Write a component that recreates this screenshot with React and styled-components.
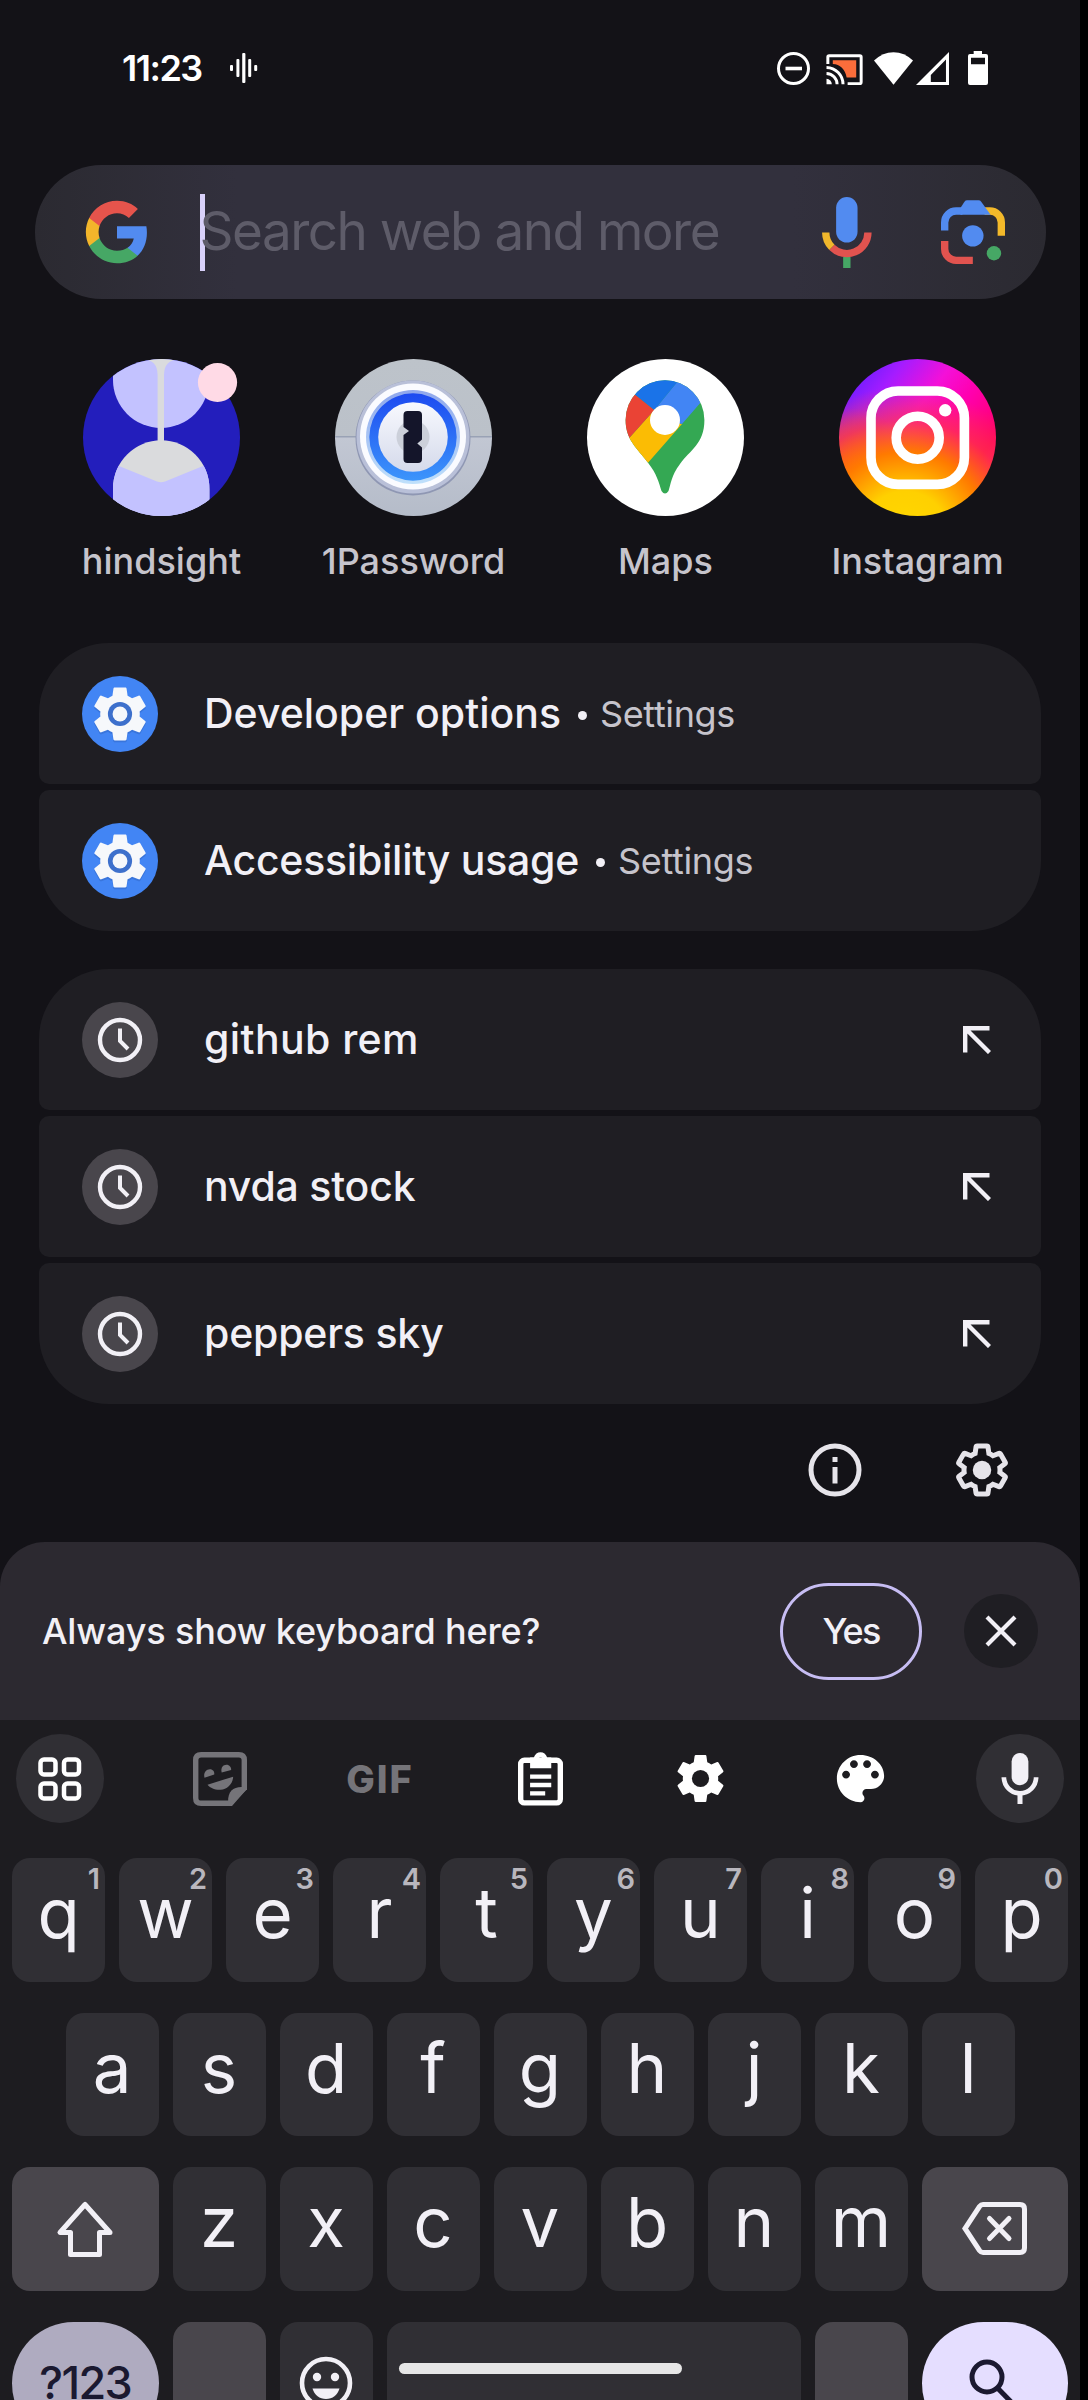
import React from "react";
import styled, { createGlobalStyle } from "styled-components";

const color = {
  screen: "#131217",
  card: "#1f1e23",
  text: "#f2f0f6",
  muted: "#c6c4cc",
  keyboard: "#1d1c20",
  key: "#302f34",
  special: "#49464c",
};

const GlobalStyle = createGlobalStyle`
  * { box-sizing: border-box; }
  body { margin: 0; background: #000; }
  svg { display: block; flex: none; }
`;

const Screen = styled.main`
  position: relative;
  display: flex;
  flex-direction: column;
  width: 1080px;
  height: 2400px;
  overflow: hidden;
  background: ${color.screen};
  color: ${color.text};
  font-family: Inter, Roboto, "Liberation Sans", sans-serif;
  & > * { flex-shrink: 0; }
`;

/* ---------- Status bar ---------- */

const StatusBar = styled.header`
  display: flex;
  align-items: center;
  justify-content: space-between;
  height: 135px;
  padding: 0 92px 0 122px;
`;

const StatusGroup = styled.div`
  display: flex;
  align-items: ${(p) => (p.$end ? "flex-end" : "center")};
  gap: ${(p) => p.$gap}px;
`;

const Clock = styled.time`
  font-size: 36px;
  font-weight: 600;
  letter-spacing: -1.5px;
  line-height: 40px;
  color: #fff;
`;

/* ---------- Search field ---------- */

const SearchBar = styled.div`
  display: flex;
  align-items: center;
  width: 1011px;
  height: 134px;
  margin: 30px 0 0 34.5px;
  padding: 0 41px 0 48px;
  border-radius: 67px;
  background: linear-gradient(90deg, #2b2a31 0%, #32303d 20%, #32303d 75%, #2b2a31 100%);
`;

const Caret = styled.span`
  width: 5px;
  height: 77px;
  margin-left: 49px;
  background: #d9d1fa;
`;

const Placeholder = styled.span`
  flex: 1;
  margin-left: -5px;
  padding-bottom: 2px;
  font-size: 53px;
  line-height: 70px;
  letter-spacing: -1.5px;
  color: #5e5c69;
`;

const SearchActions = styled.div`
  display: flex;
  align-items: center;
  gap: 69px;
`;

/* ---------- App shortcuts ---------- */

const AppRow = styled.section`
  display: grid;
  grid-template-columns: repeat(4, 252px);
  margin: 60px 0 0 35.5px;
`;

const AppTile = styled.div`
  display: flex;
  flex-direction: column;
  align-items: center;
`;

const AppLabel = styled.span`
  margin-top: 25px;
  font-size: 36px;
  font-weight: 500;
  line-height: 41px;
  color: ${color.muted};
`;

/* ---------- Result lists ---------- */

const Group = styled.section`
  display: flex;
  flex-direction: column;
  gap: 6px;
  margin: ${(p) => p.$top}px 39px 0;
`;

const Result = styled.div`
  display: flex;
  align-items: center;
  height: 141px;
  padding: 0 50px 0 43px;
  background: ${color.card};
  border-radius: 10px;
  &:first-child { border-top-left-radius: 70px; border-top-right-radius: 70px; }
  &:last-child { border-bottom-left-radius: 70px; border-bottom-right-radius: 70px; }
`;

const Badge = styled.span`
  display: flex;
  align-items: center;
  justify-content: center;
  flex: none;
  width: 76px;
  height: 76px;
  margin-right: 46px;
  border-radius: 50%;
  background: ${(p) => p.$bg};
`;

const Title = styled.span`
  padding-bottom: 2px;
  font-size: 41px;
  font-weight: 500;
  line-height: 50px;
  letter-spacing: ${(p) => p.$track || 0}px;
`;

const Dot = styled.span`
  width: 9px;
  height: 9px;
  margin: 3px 13px 0 17px;
  border-radius: 50%;
  background: ${color.text};
`;

const Source = styled.span`
  font-size: 36px;
  line-height: 44px;
  letter-spacing: -0.35px;
  color: ${color.muted};
`;

const Spacer = styled.span`
  flex: 1;
`;

const FooterActions = styled.div`
  display: flex;
  justify-content: flex-end;
  gap: 87px;
  margin-top: 36px;
  padding-right: 68px;
`;

/* ---------- Keyboard prompt ---------- */

const Prompt = styled.section`
  display: flex;
  align-items: center;
  height: 178px;
  margin-top: 42px;
  padding: 0 42px;
  border-radius: 45px 45px 0 0;
  background: #2c2930;
`;

const PromptText = styled.span`
  flex: 1;
  font-size: 36px;
  font-weight: 500;
  letter-spacing: -0.15px;
`;

const YesButton = styled.button`
  width: 142px;
  height: 97px;
  margin-right: 42px;
  padding: 0;
  border: 3px solid #c7bdf3;
  border-radius: 49px;
  background: none;
  color: ${color.text};
  font: 500 36px Inter, sans-serif;
  letter-spacing: -1.8px;
`;

const CloseButton = styled.button`
  display: flex;
  align-items: center;
  justify-content: center;
  width: 74px;
  height: 74px;
  padding: 0;
  border: 0;
  border-radius: 50%;
  background: ${color.card};
`;

/* ---------- Keyboard ---------- */

const Keyboard = styled.section`
  height: 680px;
  padding: 14px 12px 0;
  overflow: hidden;
  background: ${color.keyboard};
`;

const Toolbar = styled.div`
  display: flex;
  justify-content: space-between;
  margin: 0 4px 35px;
`;

const Tool = styled.span`
  display: flex;
  align-items: center;
  justify-content: center;
  width: 88px;
  height: 89px;
  border-radius: 50%;
  background: ${(p) => (p.$round ? color.key : "none")};
`;

const GifLabel = styled.span`
  font-size: 38px;
  font-weight: 800;
  letter-spacing: 2px;
  color: #757479;
`;

const KeyRow = styled.div`
  display: flex;
  justify-content: center;
  gap: 14px;
  height: 123.5px;
  margin-bottom: 31px;
`;

const Key = styled.span`
  position: relative;
  display: flex;
  justify-content: center;
  align-items: ${(p) => (p.$middle ? "center" : "flex-start")};
  width: ${(p) => p.$w || 93}px;
  border-radius: ${(p) => (p.$pill ? 62 : 18)}px;
  background: ${(p) => p.$bg || color.key};
  font-size: 69px;
  line-height: 110px;
`;

const Hint = styled.sup`
  position: absolute;
  top: 0;
  right: 5px;
  font-size: 29px;
  font-weight: 600;
  line-height: 41px;
  color: #b9b7be;
`;

const ModeLabel = styled.span`
  font-size: 45px;
  font-weight: 500;
  line-height: 60px;
  letter-spacing: -1.6px;
  color: #1b1930;
`;

const HomeIndicator = styled.div`
  position: absolute;
  left: 399px;
  bottom: 26px;
  width: 283px;
  height: 11px;
  border-radius: 6px;
  background: #e6e6e6;
`;

/* ---------- Icons ---------- */

const gearPath =
  "M19.14 12.94c.04-.3.06-.61.06-.94 0-.32-.02-.64-.07-.94l2.03-1.58c.18-.14.23-.41.12-.61l-1.92-3.32c-.12-.22-.37-.29-.59-.22l-2.39.96c-.5-.38-1.03-.7-1.62-.94l-.36-2.54c-.04-.24-.24-.41-.48-.41h-3.84c-.24 0-.43.17-.47.41l-.36 2.54c-.59.24-1.13.57-1.62.94l-2.39-.96c-.22-.08-.47 0-.59.22L2.74 8.87c-.12.21-.08.47.12.61l2.03 1.58c-.05.3-.09.63-.09.94s.02.64.07.94l-2.03 1.58c-.18.14-.23.41-.12.61l1.92 3.32c.12.22.37.29.59.22l2.39-.96c.5.38 1.03.7 1.62.94l.36 2.54c.05.24.24.41.48.41h3.84c.24 0 .44-.17.47-.41l.36-2.54c.59-.24 1.13-.56 1.62-.94l2.39.96c.22.08.47 0 .59-.22l1.92-3.32c.12-.22.07-.47-.12-.61l-2.01-1.58z";

const WaveIcon = () => (
  <svg width="28" height="30" viewBox="0 0 28 30" fill="#fff">
    <rect x="0" y="12" width="3" height="6" rx="1" />
    <rect x="6.4" y="6" width="3" height="18" rx="1" />
    <rect x="12.2" y="0" width="3.2" height="30" rx="1" />
    <rect x="18.2" y="6" width="3" height="18" rx="1" />
    <rect x="24.2" y="12" width="3" height="6" rx="1" />
  </svg>
);

const DndIcon = () => (
  <svg width="33" height="33" viewBox="0 0 33 33">
    <circle cx="16.5" cy="16.5" r="15" fill="none" stroke="#fff" strokeWidth="3" />
    <path d="M8.5 16.5h16.5" stroke="#fff" strokeWidth="3.6" />
  </svg>
);

const CastIcon = () => (
  <svg width="37" height="31" viewBox="0 0 111 94" fill="none" stroke="#fff" strokeWidth="9">
    <path d="M5 30V9q0-4 4-4H102q4 0 4 4V86q0 4-4 4H65" />
    <path d="M20 19H91V71H62C58 46 42 31 20 30Z" fill="#fb6d3b" stroke="none" />
    <path d="M1 41A51 51 0 0 1 51 92M1 59A33 33 0 0 1 33 92" />
    <path d="M1 75A17 17 0 0 1 17 92H1Z" fill="#fff" stroke="none" />
  </svg>
);

const WifiIcon = () => (
  <svg width="39" height="33" viewBox="0 0 117 98" fill="#fff">
    <path d="M58.500 98L0 25Q26 0 58.500 0T117 25Z" />
  </svg>
);

const SignalIcon = () => (
  <svg width="33" height="33" viewBox="0 0 98 98" fill="#fff">
    <path fillRule="evenodd" d="M98 0V98H0ZM89 22V89H44V68Z" />
  </svg>
);

const BatteryIcon = () => (
  <svg width="20" height="34" viewBox="0 0 60 102">
    <path fill="#fff" fillRule="evenodd" d="M17 0H42V9H54q6 0 6 6V96q0 6-6 6H6q-6 0-6-6V15q0-6 6-6H17ZM9 20V40H51V20Z" />
  </svg>
);

const GoogleIcon = () => (
  <svg width="68" height="68" viewBox="0 0 24 24">
    <path fill="#528bf0" d="M22.56 12.25c0-.78-.07-1.53-.2-2.25H12v4.26h5.92c-.26 1.37-1.04 2.53-2.21 3.31v2.77h3.57c2.08-1.92 3.28-4.74 3.28-8.090z" />
    <path fill="#46a765" d="M12 23c2.970 0 5.460-.98 7.280-2.660l-3.570-2.770c-.98.66-2.230 1.060-3.710 1.060-2.860 0-5.290-1.930-6.160-4.530H2.180v2.840C3.990 20.530 7.700 23 12 23z" />
    <path fill="#f3b62b" d="M5.840 14.090c-.22-.66-.35-1.360-.35-2.090s.13-1.430.35-2.090V7.070H2.180C1.430 8.550 1 10.220 1 12s.43 3.450 1.180 4.930l2.850-2.220.81-.62z" />
    <path fill="#e6544c" d="M12 5.380c1.620 0 3.060.56 4.210 1.640l3.150-3.150C17.450 2.090 14.970 1 12 1 7.700 1 3.990 3.470 2.180 7.070l3.660 2.840c.87-2.600 3.300-4.530 6.160-4.530z" />
  </svg>
);

const VoiceIcon = () => (
  <svg width="50" height="71" viewBox="0 0 149 212" fill="none" strokeWidth="22">
    <rect x="42" y="0" width="64" height="136" rx="32" fill="#528bf0" />
    <path d="M63 179h22v33H63z" fill="#46a765" />
    <path d="M11 106A63 63 0 0 0 29.500 150.500" stroke="#f0b72c" />
    <path d="M29.500 150.500A63 63 0 0 0 137 106" stroke="#e1534f" />
  </svg>
);

const LensIcon = () => (
  <svg width="64" height="64" viewBox="0 0 191 191" fill="none" strokeWidth="22">
    <path d="M130 33H146a34 34 0 0 1 34 34V107" stroke="#f3b92a" />
    <path d="M11 91V67a34 34 0 0 1 34-34H64" stroke="#528bf0" />
    <path d="M58 24L70 5Q73 1 78 1H112Q117 1 120 5L148 44H58Z" fill="#528bf0" />
    <path d="M11 122V146a34 34 0 0 0 34 34H95" stroke="#e1534f" />
    <circle cx="95" cy="107" r="32" fill="#528bf0" />
    <circle cx="158" cy="159" r="21.500" fill="#46a765" />
  </svg>
);

const HindsightIcon = () => (
  <svg width="157" height="157" viewBox="0 0 157 157">
    <clipPath id="hs-disc"><circle cx="78.500" cy="78.500" r="78.500" /></clipPath>
    <clipPath id="hs-base"><path d="M30 160V129.500a48.200 48.200 0 0 1 96.400 0V160Z" /></clipPath>
    <g clipPath="url(#hs-disc)">
      <rect width="157" height="157" fill="#231ebc" />
      <path d="M30 0V21a48 48 0 0 0 96 0V0Z" fill="#c3c2ff" />
      <path d="M60 0Q74.600 1 74.600 16V84H81V16Q81 1 96 0Z" fill="#dadbdd" />
      <g clipPath="url(#hs-base)">
        <rect y="78" width="157" height="80" fill="#dadbdd" />
        <path d="M20 100L36 107L74 122.500Q78 124 82 122.500L120 107L140 99V160H20Z" fill="#c3c2ff" />
      </g>
    </g>
    <circle cx="134.500" cy="23.500" r="19.600" fill="#ffdae6" />
  </svg>
);

const OnePasswordIcon = () => (
  <svg width="157" height="157" viewBox="0 0 157 157">
    <defs>
      <linearGradient id="op-plate" x1="0" y1="0" x2="0" y2="1">
        <stop offset="0" stopColor="#bdc3ca" /><stop offset=".49" stopColor="#bbc1c9" />
        <stop offset=".5" stopColor="#c2c7d3" /><stop offset="1" stopColor="#b5bcc9" />
      </linearGradient>
      <linearGradient id="op-blue" x1="0" y1="0" x2="0" y2="1">
        <stop offset="0" stopColor="#1d4af0" /><stop offset="1" stopColor="#3c95fb" />
      </linearGradient>
      <linearGradient id="op-face" x1="0" y1="0" x2="0" y2="1">
        <stop offset="0" stopColor="#f8f9fe" /><stop offset="1" stopColor="#d5daeb" />
      </linearGradient>
      <linearGradient id="op-rim" x1="0" y1="0" x2="0" y2="1">
        <stop offset="0" stopColor="#8fa7ec" /><stop offset="1" stopColor="#bfe0fb" />
      </linearGradient>
    </defs>
    <circle cx="78.500" cy="78.500" r="78.500" fill="url(#op-plate)" />
    <path d="M0 77.800H157" stroke="#99a2b5" strokeWidth="1.400" />
    <circle cx="78" cy="79" r="57.500" fill="#8f97b3" />
    <circle cx="78" cy="78" r="56.500" fill="#b9c0d8" />
    <circle cx="78" cy="77.500" r="53" fill="#fafbff" />
    <circle cx="78" cy="78" r="47" fill="url(#op-rim)" />
    <circle cx="78" cy="78" r="43.700" fill="url(#op-blue)" />
    <circle cx="78" cy="78" r="34.800" fill="url(#op-face)" />
    <circle cx="78" cy="78" r="16.500" fill="#ccd0da" />
    <path d="M72.500 52H83q4 0 4 4V80.500L82.300 84.500L87 88.500V100q0 4-4 4H72.500q-4 0-4-4V76L74 72L68.500 68V56q0-4 4-4Z" fill="#14152a" />
  </svg>
);

const MapsIcon = () => (
  <svg width="157" height="157" viewBox="0 0 157 157">
    <clipPath id="maps-pin">
      <path d="M38.600 61A39.400 39.700 0 0 1 117.400 61C117.400 85 103 91 93 105C84 117 84 125 81.500 132Q78 137 74.500 132C72 124 70 115 61 103.700C50 89 38.600 81 38.600 61Z" />
    </clipPath>
    <circle cx="78.500" cy="78.500" r="78.500" fill="#fff" />
    <g clipPath="url(#maps-pin)">
      <rect width="157" height="157" fill="#34a853" />
      <path d="M67.300 51L42 79.300L30 93L61 103.700L95 64.900L78 61Z" fill="#fbbc04" />
      <path d="M30 20L48.600 36L67.300 51L42 79.300L30 93Z" fill="#ea4335" />
      <path d="M89.500 23.700L92 10H140V13.500L113 44.300L95 64.900L78 61L67.300 51Z" fill="#4285f4" />
      <path d="M48.600 36L30 20V5H105L67.300 51Z" fill="#1a73e8" />
    </g>
    <circle cx="78" cy="61" r="15" fill="#fff" />
  </svg>
);

const InstagramDisc = styled.span`
  display: flex;
  width: 157px;
  height: 157px;
  border-radius: 50%;
  background:
    radial-gradient(circle at 42% 112%, #ffd900 0%, #ffd000 22%, #ff7a00 42%, rgba(255, 60, 60, 0.6) 58%, rgba(255, 0, 110, 0) 75%),
    radial-gradient(circle at 8% 68%, #ff6a00 0%, rgba(255, 70, 40, 0.6) 16%, rgba(255, 0, 110, 0) 32%),
    linear-gradient(128deg, #6a1dff 10%, #a51cff 24%, #f410d8 42%, #ff00b0 56%, #ff0069 78%, #ff1a8c 100%);
`;

const InstagramIcon = () => (
  <InstagramDisc>
    <svg width="157" height="157" viewBox="0 0 157 157" fill="none" stroke="#fff" strokeWidth="9.600">
      <rect x="32" y="32" width="93.400" height="93.400" rx="27" />
      <circle cx="78.700" cy="78.700" r="21.500" />
      <circle cx="106.200" cy="51.300" r="6.200" fill="#fff" stroke="none" />
    </svg>
  </InstagramDisc>
);

const SettingsAppIcon = () => (
  <svg width="66" height="66" viewBox="0 0 24 24">
    <path d={gearPath} fill="#2f66c4" opacity=".5" transform="translate(0 .7)" />
    <path d={gearPath} fill="#f6f8fb" />
    <circle cx="12" cy="12" r="4.400" fill="#3d70cc" />
    <circle cx="12" cy="12" r="2.700" fill="#f6f8fb" />
  </svg>
);

const HistoryIcon = () => (
  <svg width="48" height="48" viewBox="0 0 48 48" fill="none" stroke={color.text} strokeWidth="4.400">
    <circle cx="24" cy="24" r="20" />
    <path d="M24 12.500V25L32 33" strokeWidth="4" />
  </svg>
);

const InsertIcon = () => (
  <svg width="28" height="28" viewBox="0 0 28 28" fill="none" stroke={color.text} strokeWidth="4.400">
    <path d="M2.200 26.500V2.200H26.500M2.200 2.200L26.500 26.500" />
  </svg>
);

const InfoIcon = () => (
  <svg width="60" height="60" viewBox="0 0 60 60" fill="none" stroke="#e6e4ea" strokeWidth="5">
    <circle cx="30" cy="30" r="24" />
    <path d="M30 27V43.500M30 17V22" />
  </svg>
);

const SettingsOutlineIcon = () => (
  <svg width="60" height="60" viewBox="0 0 24 24">
    <path d={gearPath} fill="none" stroke="#e6e4ea" strokeWidth="2" />
    <circle cx="12" cy="12" r="3.700" fill="#e6e4ea" />
  </svg>
);

const CloseIcon = () => (
  <svg width="32" height="32" viewBox="0 0 32 32">
    <path d="M2 2L30 30M30 2L2 30" stroke={color.text} strokeWidth="4.200" />
  </svg>
);

const GridIcon = () => (
  <svg width="44" height="44" viewBox="0 0 44 44" fill="none" stroke="#fff" strokeWidth="4.500">
    {[[2.5, 2.5], [26, 2.5], [2.5, 26.5], [26, 26.5]].map(([x, y]) => (
      <rect key={`${x}-${y}`} x={x} y={y} width="15" height="15" rx="3.500" />
    ))}
  </svg>
);

const StickerIcon = () => (
  <svg width="54" height="54" viewBox="0 0 160 160" fill="#757479">
    <path d="M24 8H136q16 0 16 16V106L112 152H24q-16 0-16-16V24q0-16 16-16Z" fill="none" stroke="#757479" strokeWidth="16" />
    <path d="M104 160V146Q104 104 144 104H160V110L112 160Z" />
    <path d="M34 76C30 60 40 51 50 51C59 51 64 58 63 67Z" />
    <path d="M85 61C81 46 90 38 99 38C108 38 114 46 113 53Z" />
    <path d="M43 97L119 73C118 95 101 111 82 112C64 113 50 106 43 97Z" />
  </svg>
);

const ClipboardIcon = () => (
  <svg width="45" height="54" viewBox="0 0 134 160" fill="none" stroke="#fff">
    <rect x="8" y="24" width="118" height="127" rx="11" strokeWidth="16" />
    <path fill="#fff" stroke="none" fillRule="evenodd" d="M36 48V16H47Q53 0 67 0Q81 0 87 16H99V48ZM67 16a8 8 0 1 0 .1 0Z" />
    <path d="M36 73H99M36 98H99M36 123H81" strokeWidth="13" />
  </svg>
);

const GearIcon = () => (
  <svg width="59" height="59" viewBox="0 0 24 24">
    <path fill="#fff" d={gearPath} />
    <circle cx="12" cy="12" r="3.500" fill={color.keyboard} />
  </svg>
);

const PaletteIcon = () => (
  <svg width="63" height="63" viewBox="0 0 24 24" fill="#fff">
    <path d="M12 3c-4.970 0-9 4.030-9 9s4.030 9 9 9c.83 0 1.500-.67 1.500-1.500 0-.39-.15-.74-.39-1.010-.23-.26-.38-.61-.38-.99 0-.83.67-1.500 1.500-1.500H16c2.760 0 5-2.240 5-5 0-4.420-4.030-8-9-8zm-5.500 9c-.83 0-1.500-.67-1.500-1.500S5.670 9 6.500 9 8 9.670 8 10.500 7.330 12 6.500 12zm3-4C8.670 8 8 7.330 8 6.500S8.670 5 9.500 5s1.500.67 1.500 1.500S10.330 8 9.500 8zm5 0c-.83 0-1.500-.67-1.500-1.500S13.670 5 14.500 5s1.500.67 1.500 1.500S15.330 8 14.500 8zm3 4c-.83 0-1.500-.67-1.500-1.500S16.670 9 17.500 9s1.500.67 1.500 1.500-.67 1.500-1.500 1.500z" />
  </svg>
);

const MicIcon = () => (
  <svg width="38" height="51" viewBox="0 0 112 152" fill="none" stroke={color.text}>
    <rect x="31" y="0" width="50" height="96" rx="25" fill={color.text} stroke="none" />
    <path d="M8 72a48 48 0 0 0 96 0" strokeWidth="14" />
    <path d="M56 120V152" strokeWidth="15" />
  </svg>
);

const ShiftIcon = () => (
  <svg width="60" height="58" viewBox="0 0 60 58">
    <path d="M30 4.500L5 32.500H15.500V54.500H44.500V32.500H55Z" fill="none" stroke={color.text} strokeWidth="5" strokeLinejoin="round" />
  </svg>
);

const BackspaceIcon = () => (
  <svg width="65" height="53" viewBox="0 0 65 53" fill="none" stroke={color.text} strokeWidth="5">
    <path d="M21 2.500H58q4.500 0 4.500 4.500V46q0 4.500-4.500 4.500H21Q19 50.500 17.500 48.500L3 26.500L17.500 4.500Q19 2.500 21 2.500Z" />
    <path d="M27.500 16.500L47 36.500M47 16.500L27.500 36.500" strokeLinecap="round" />
  </svg>
);

const EmojiIcon = () => (
  <svg width="54" height="54" viewBox="0 0 54 54" fill={color.text}>
    <circle cx="27" cy="27" r="24" fill="none" stroke={color.text} strokeWidth="4.600" />
    <circle cx="18" cy="21" r="4.200" />
    <circle cx="36" cy="21" r="4.200" />
    <path d="M13.500 32.500H40.500C38.500 39 33.500 43 27 43S15.500 39 13.500 32.500Z" />
  </svg>
);

const SearchIcon = () => (
  <svg width="54" height="58" viewBox="0 0 54 58" fill="none" stroke="#1b1930" strokeWidth="5">
    <circle cx="19" cy="23" r="15" />
    <path d="M29.500 34L50 55" />
  </svg>
);

/* ---------- Data ---------- */

const apps = [
  { name: "hindsight", Icon: HindsightIcon },
  { name: "1Password", Icon: OnePasswordIcon },
  { name: "Maps", Icon: MapsIcon },
  { name: "Instagram", Icon: InstagramIcon },
];

const settings = [
  { title: "Developer options", track: 0 },
  { title: "Accessibility usage", track: -0.25 },
];

const history = [
  { title: "github rem", track: 0.4 },
  { title: "nvda stock", track: -0.2 },
  { title: "peppers sky", track: -0.2 },
];

export default function App() {
  return (
    <Screen>
      <GlobalStyle />

      <StatusBar>
        <StatusGroup $gap={28}>
          <Clock>11:23</Clock>
          <WaveIcon />
        </StatusGroup>
        <StatusGroup $gap={19} $end>
          <StatusGroup $gap={16} $end>
            <DndIcon />
            <StatusGroup $gap={11} $end>
              <CastIcon />
              <StatusGroup $gap={3} $end>
                <WifiIcon />
                <SignalIcon />
              </StatusGroup>
            </StatusGroup>
          </StatusGroup>
          <BatteryIcon />
        </StatusGroup>
      </StatusBar>

      <SearchBar>
        <GoogleIcon />
        <Caret />
        <Placeholder>Search web and more</Placeholder>
        <SearchActions>
          <VoiceIcon />
          <LensIcon />
        </SearchActions>
      </SearchBar>

      <AppRow>
        {apps.map(({ name, Icon }) => (
          <AppTile key={name}>
            <Icon />
            <AppLabel>{name}</AppLabel>
          </AppTile>
        ))}
      </AppRow>

      <Group $top={61}>
        {settings.map(({ title, track }) => (
          <Result key={title}>
            <Badge $bg="#4285f4"><SettingsAppIcon /></Badge>
            <Title $track={track}>{title}</Title>
            <Dot />
            <Source>Settings</Source>
          </Result>
        ))}
      </Group>

      <Group $top={38}>
        {history.map(({ title, track }) => (
          <Result key={title}>
            <Badge $bg="#49464c"><HistoryIcon /></Badge>
            <Title $track={track}>{title}</Title>
            <Spacer />
            <InsertIcon />
          </Result>
        ))}
      </Group>

      <FooterActions>
        <InfoIcon />
        <SettingsOutlineIcon />
      </FooterActions>

      <Prompt>
        <PromptText>Always show keyboard here?</PromptText>
        <YesButton>Yes</YesButton>
        <CloseButton aria-label="Close"><CloseIcon /></CloseButton>
      </Prompt>

      <Keyboard>
        <Toolbar>
          <Tool $round><GridIcon /></Tool>
          <Tool><StickerIcon /></Tool>
          <Tool><GifLabel>GIF</GifLabel></Tool>
          <Tool><ClipboardIcon /></Tool>
          <Tool><GearIcon /></Tool>
          <Tool><PaletteIcon /></Tool>
          <Tool $round><MicIcon /></Tool>
        </Toolbar>
        <KeyRow>
          {[..."qwertyuiop"].map((letter, i) => (
            <Key key={letter}>
              {letter}
              <Hint>{(i + 1) % 10}</Hint>
            </Key>
          ))}
        </KeyRow>
        <KeyRow>
          {[..."asdfghjkl"].map((letter) => <Key key={letter}>{letter}</Key>)}
        </KeyRow>
        <KeyRow>
          <Key $w={146.5} $bg={color.special} $middle><ShiftIcon /></Key>
          {[..."zxcvbnm"].map((letter) => <Key key={letter}>{letter}</Key>)}
          <Key $w={146.5} $bg={color.special} $middle><BackspaceIcon /></Key>
        </KeyRow>
        <KeyRow>
          <Key $w={146.5} $bg="#afabc0" $pill $middle><ModeLabel>?123</ModeLabel></Key>
          <Key $bg={color.special} />
          <Key $middle><EmojiIcon /></Key>
          <Key $w={414} />
          <Key $bg={color.special} />
          <Key $w={146.5} $bg="#e5deff" $pill $middle><SearchIcon /></Key>
        </KeyRow>
      </Keyboard>

      <HomeIndicator />
    </Screen>
  );
}
